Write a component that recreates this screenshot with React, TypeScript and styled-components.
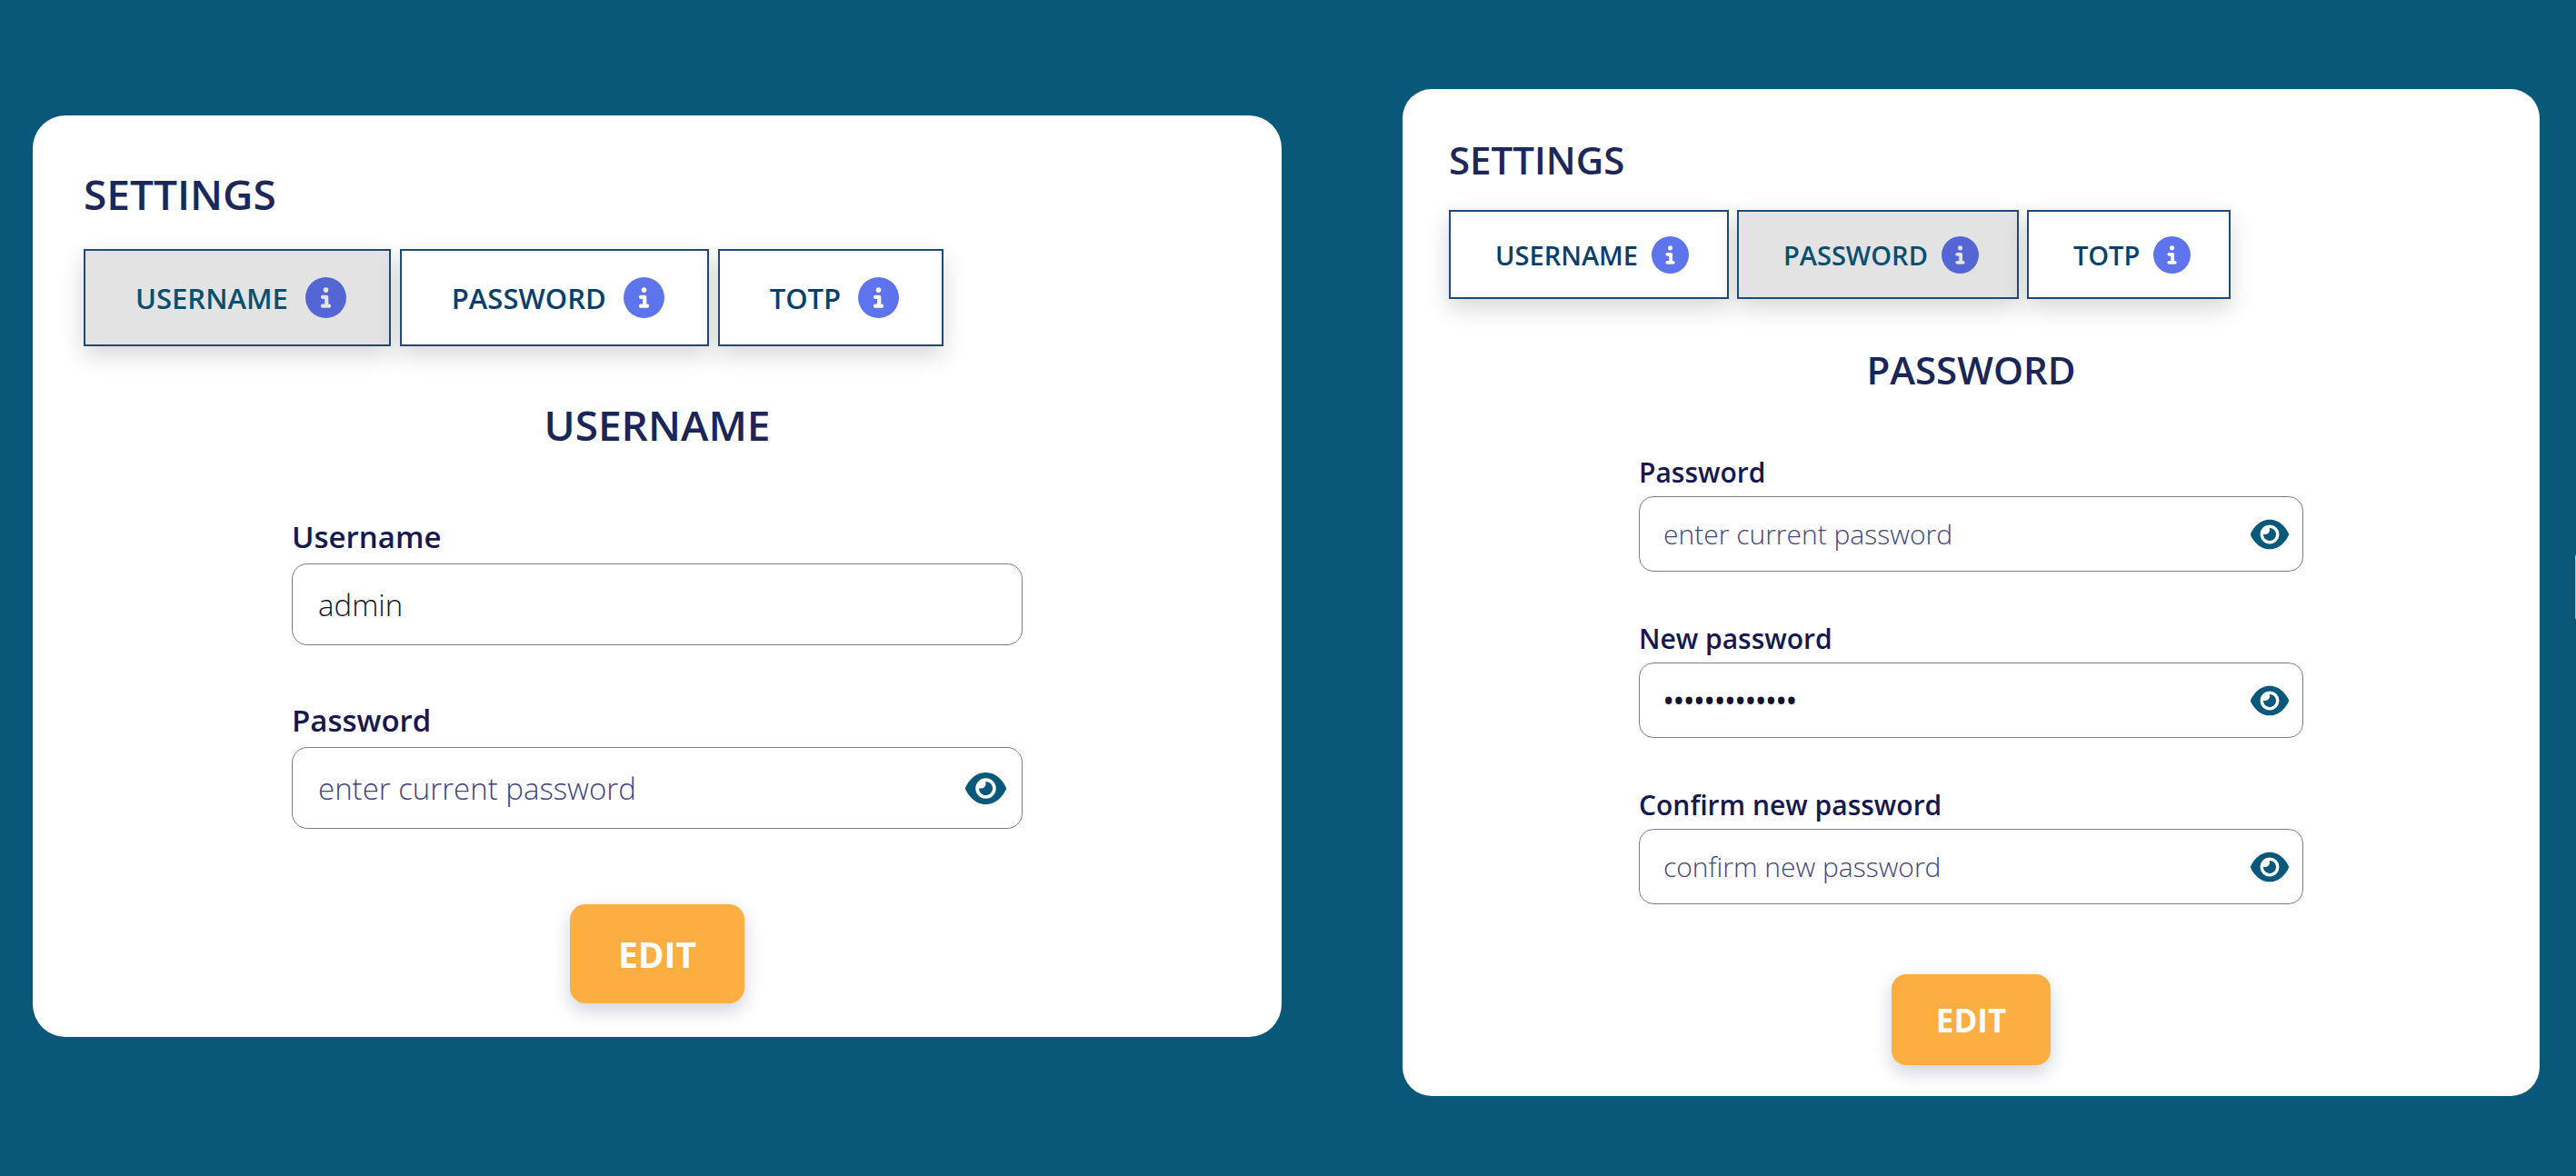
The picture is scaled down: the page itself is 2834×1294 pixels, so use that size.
import React, { useId, useState } from "react";
import styled, { createGlobalStyle, ThemeProvider } from "styled-components";
import { FaCircleInfo, FaEye } from "react-icons/fa6";

interface Metrics {
  offset: number;
  radius: number;
  padTop: number;
  padX: number;
  padBottom: number;
  title: number;
  titleLine: number;
  titleGap: number;
  tab: number;
  tabHeight: number;
  tabPadLeft: number;
  tabPadRight: number;
  tabInner: number;
  tabGap: number;
  info: number;
  headingGap: number;
  formGap: number;
  formWidth: number;
  text: number;
  labelLine: number;
  labelGap: number;
  field: number;
  fieldGap: number;
  fieldPad: number;
  fieldRadius: number;
  eye: number;
  eyePad: number;
  submitGap: number;
  submit: number;
  submitWidth: number;
  submitHeight: number;
}

const large: Metrics = {
  offset: 29,
  radius: 36,
  padTop: 58,
  padX: 56,
  padBottom: 37,
  title: 46,
  titleLine: 56,
  titleGap: 33,
  tab: 31,
  tabHeight: 107,
  tabPadLeft: 55,
  tabPadRight: 47,
  tabInner: 19,
  tabGap: 10,
  info: 45,
  headingGap: 58,
  formGap: 76,
  formWidth: 804,
  text: 33,
  labelLine: 40,
  labelGap: 9,
  field: 90,
  fieldGap: 63,
  fieldPad: 28,
  fieldRadius: 17,
  eye: 45,
  eyePad: 17,
  submitGap: 83,
  submit: 39,
  submitWidth: 192,
  submitHeight: 109,
};

const compact: Metrics = {
  offset: 0,
  radius: 32,
  padTop: 51,
  padX: 51,
  padBottom: 34,
  title: 42,
  titleLine: 54,
  titleGap: 28,
  tab: 29,
  tabHeight: 98,
  tabPadLeft: 49,
  tabPadRight: 42,
  tabInner: 15,
  tabGap: 9,
  info: 41,
  headingGap: 51,
  formGap: 67,
  formWidth: 731,
  text: 30,
  labelLine: 38,
  labelGap: 7,
  field: 83,
  fieldGap: 55,
  fieldPad: 26,
  fieldRadius: 16,
  eye: 42,
  eyePad: 15,
  submitGap: 77,
  submit: 35,
  submitWidth: 175,
  submitHeight: 100,
};

const GlobalStyle = createGlobalStyle`
  *, *::before, *::after { box-sizing: border-box; }
  body {
    margin: 0;
    background: #095779;
    font-family: "Open Sans", "Noto Sans", sans-serif;
  }
  button, input { font-family: inherit; }
`;

type M = { theme: any };
const px = (key: keyof Metrics) => (p: M) => `${p.theme[key]}px`;

const Page = styled.main`
  position: relative;
  display: grid;
  grid-template-columns: 1374fr 1251fr;
  gap: 133px;
  align-items: start;
  min-height: 100vh;
  padding: 98px 40px 88px 36px;
  overflow: hidden;
`;

const Card = styled.section`
  display: flex;
  flex-direction: column;
  margin-top: ${px("offset")};
  padding: ${px("padTop")} ${px("padX")} ${px("padBottom")};
  border-radius: ${px("radius")};
  background: #fff;
`;

const Title = styled.h1`
  margin: 0 0 ${px("titleGap")};
  color: #1b2859;
  font-size: ${px("title")};
  font-weight: 600;
  line-height: ${px("titleLine")};
`;

const Tabs = styled.nav`
  display: flex;
  gap: ${px("tabGap")};
`;

const Tab = styled.button<{ $active: boolean }>`
  display: flex;
  align-items: center;
  gap: ${px("tabInner")};
  height: ${px("tabHeight")};
  padding: 0 ${px("tabPadRight")} 0 ${px("tabPadLeft")};
  border: 2px solid #1f4a7c;
  background: ${(p) => (p.$active ? "#e3e3e3" : "#fff")};
  box-shadow: 0 10px 24px rgba(0, 0, 0, 0.16);
  color: ${(p) => (p.$active ? "#0a4f6e" : "#093f6c")};
  font-size: ${px("tab")};
  font-weight: 600;
  cursor: pointer;

  svg {
    flex: none;
    width: ${px("info")};
    height: ${px("info")};
    color: ${(p) => (p.$active ? "#5466d4" : "#5e74ec")};
  }
`;

const Heading = styled.h2`
  margin: ${px("headingGap")} 0 ${px("formGap")};
  color: #1a2658;
  font-size: ${px("title")};
  font-weight: 600;
  line-height: ${px("titleLine")};
  text-align: center;
`;

const Form = styled.form`
  display: flex;
  flex-direction: column;
  gap: ${px("fieldGap")};
  width: 100%;
  max-width: ${px("formWidth")};
  margin: 0 auto;
`;

const FieldGroup = styled.div`
  display: flex;
  flex-direction: column;
  gap: ${px("labelGap")};
`;

const Label = styled.label`
  color: #16184f;
  font-size: ${px("text")};
  font-weight: 600;
  line-height: ${px("labelLine")};
`;

const Box = styled.div`
  display: flex;
  align-items: center;
  height: ${px("field")};
  padding-right: ${px("eyePad")};
  border: 1px solid #7c7c8c;
  border-radius: ${px("fieldRadius")};
  background: #fff;
`;

const Input = styled.input<{ $masked: boolean }>`
  flex: 1;
  min-width: 0;
  height: 100%;
  padding: 0 ${px("fieldPad")};
  border: 0;
  outline: 0;
  background: transparent;
  color: #14142c;
  font-size: ${px("text")};
  font-weight: ${(p) => (p.$masked ? 600 : 300)};

  &::placeholder {
    color: #44447e;
    font-weight: 300;
    opacity: 1;
  }
`;

const Reveal = styled.button`
  display: flex;
  padding: 0;
  border: 0;
  background: none;
  color: #08587b;
  cursor: pointer;

  svg {
    width: ${px("eye")};
    height: ${px("eye")};
  }
`;

const Submit = styled.button`
  align-self: center;
  width: ${px("submitWidth")};
  height: ${px("submitHeight")};
  margin-top: calc(${px("submitGap")} - ${px("fieldGap")});
  padding: 0;
  border: 0;
  border-radius: ${px("fieldRadius")};
  background: #fcae41;
  box-shadow: 0 8px 20px rgba(20, 30, 70, 0.2);
  color: #fff;
  font-size: ${px("submit")};
  font-weight: 700;
  cursor: pointer;
`;

const DrawerEdge = styled.span`
  position: absolute;
  top: 611px;
  right: 0;
  width: 1px;
  height: 70px;
  background: #9fc4d2;
`;

interface FieldProps {
  label: string;
  secret?: boolean;
  value?: string;
  placeholder?: string;
}

function Field({ label, secret = false, value = "", placeholder }: FieldProps) {
  const id = useId();
  const [shown, setShown] = useState(false);
  const masked = secret && !shown;
  return (
    <FieldGroup>
      <Label htmlFor={id}>{label}</Label>
      <Box>
        <Input
          id={id}
          $masked={masked}
          type={masked ? "password" : "text"}
          defaultValue={value}
          placeholder={placeholder}
        />
        {secret && (
          <Reveal type="button" aria-label={`Show ${label}`} onClick={() => setShown(!shown)}>
            <FaEye />
          </Reveal>
        )}
      </Box>
    </FieldGroup>
  );
}

const tabs = ["USERNAME", "PASSWORD", "TOTP"];

interface SettingsProps {
  metrics: Metrics;
  active: string;
  fields: FieldProps[];
}

function SettingsCard({ metrics, active, fields }: SettingsProps) {
  return (
    <ThemeProvider theme={metrics}>
      <Card>
        <Title>SETTINGS</Title>
        <Tabs>
          {tabs.map((name) => (
            <Tab key={name} type="button" $active={name === active}>
              {name}
              <FaCircleInfo />
            </Tab>
          ))}
        </Tabs>
        <Heading>{active}</Heading>
        <Form onSubmit={(e) => e.preventDefault()}>
          {fields.map((field) => (
            <Field key={field.label} {...field} />
          ))}
          <Submit type="submit">EDIT</Submit>
        </Form>
      </Card>
    </ThemeProvider>
  );
}

export default function App() {
  return (
    <>
      <GlobalStyle />
      <Page>
        <SettingsCard
          metrics={large}
          active="USERNAME"
          fields={[
            { label: "Username", value: "admin" },
            { label: "Password", secret: true, placeholder: "enter current password" },
          ]}
        />
        <SettingsCard
          metrics={compact}
          active="PASSWORD"
          fields={[
            { label: "Password", secret: true, placeholder: "enter current password" },
            { label: "New password", secret: true, value: "correct-horse" },
            { label: "Confirm new password", secret: true, placeholder: "confirm new password" },
          ]}
        />
        <DrawerEdge />
      </Page>
    </>
  );
}
